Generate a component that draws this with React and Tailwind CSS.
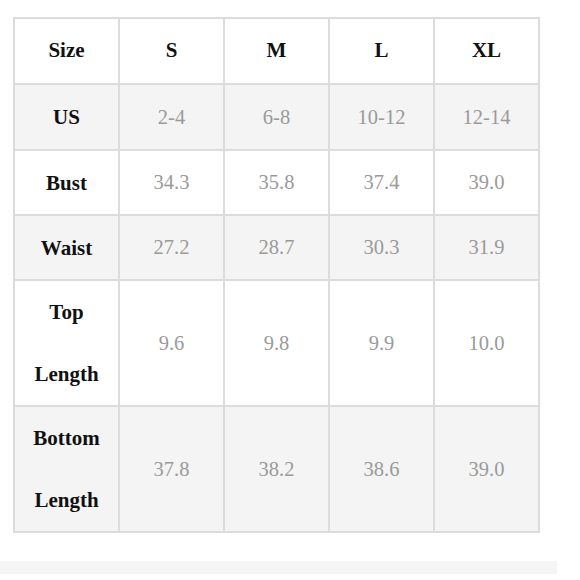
export default function App() {
  const header = ["Size", "S", "M", "L", "XL"];
  const rows = [
    { label: ["US"], vals: ["2-4", "6-8", "10-12", "12-14"], h: "h-[66px]", bg: "bg-[#f4f4f4]" },
    { label: ["Bust"], vals: ["34.3", "35.8", "37.4", "39.0"], h: "h-[65px]", bg: "bg-white" },
    { label: ["Waist"], vals: ["27.2", "28.7", "30.3", "31.9"], h: "h-[65px]", bg: "bg-[#f4f4f4]" },
    { label: ["Top", "Length"], vals: ["9.6", "9.8", "9.9", "10.0"], h: "h-[126px]", bg: "bg-white" },
    { label: ["Bottom", "Length"], vals: ["37.8", "38.2", "38.6", "39.0"], h: "h-[126px]", bg: "bg-[#f4f4f4]" },
  ];
  const cell = "flex flex-col items-center justify-center border-r-2 border-b-2 border-[#dcdcdc] text-center";
  return (
    <div className="w-[580px] h-[580px] bg-white relative font-['Liberation_Serif','Times_New_Roman',serif]">
      <div className="pl-[13px] pt-[17px]">
        <div className="grid grid-cols-[repeat(5,105px)] w-fit border-l-2 border-t-2 border-[#dcdcdc]">
          {header.map((h) => (
            <div key={h} className={`${cell} h-[66px] bg-white font-bold text-[21px] text-[#111]`}>{h}</div>
          ))}
          {rows.map((r, i) => (
            <div key={i} className="contents">
              <div className={`${cell} ${r.h} ${r.bg} font-bold text-[21px] text-[#111] leading-[62px]`}>
                {r.label.map((l) => (
                  <span key={l}>{l}</span>
                ))}
              </div>
              {r.vals.map((v, j) => (
                <div key={j} className={`${cell} ${r.h} ${r.bg} text-[20.5px] text-[#9a9a9a]`}>{v}</div>
              ))}
            </div>
          ))}
        </div>
      </div>
      <div className="mt-[28px] w-[557px] h-[13px] bg-[#f5f5f5]"></div>
    </div>
  );
}
